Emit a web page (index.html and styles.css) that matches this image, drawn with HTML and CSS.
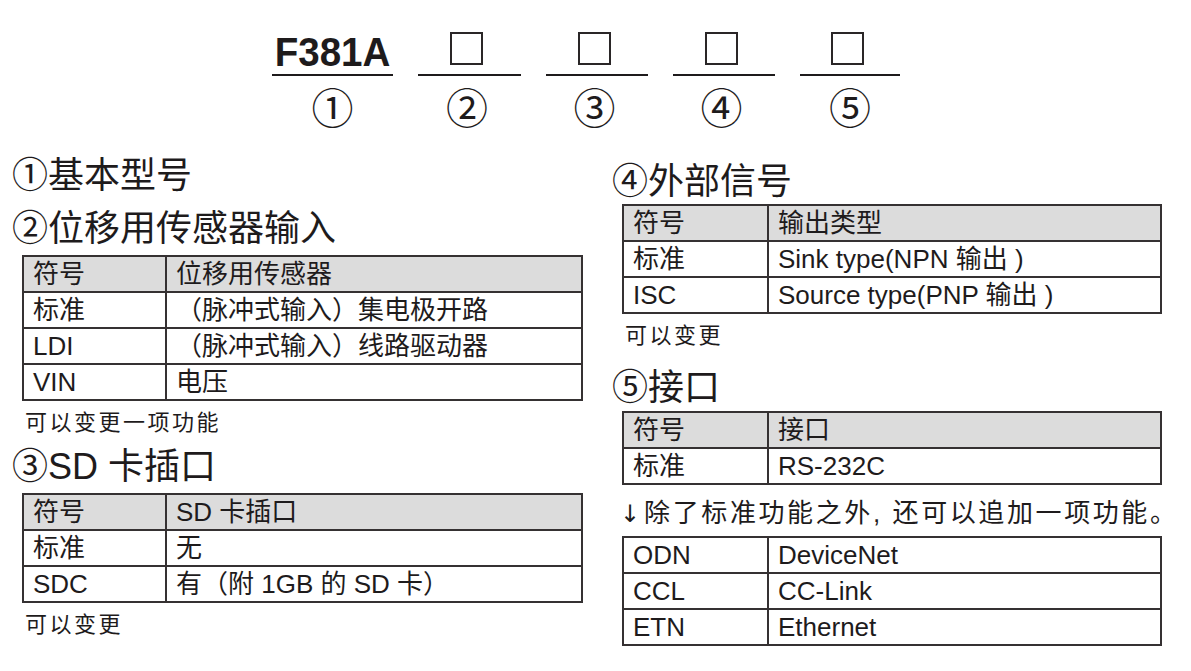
FILE: index.html
```html
<!DOCTYPE html>
<html lang="zh-CN">
<head>
<meta charset="utf-8">
<title>F381A 型号说明</title>
<link rel="stylesheet" href="styles.css">
</head>
<body>
<div class="page">
  <div class="code">
    <div class="seg seg1"><div class="top"><span class="model">F381A</span></div><div class="rule"></div><div class="num">①</div></div>
    <div class="seg seg2"><div class="top"><span class="box"></span></div><div class="rule"></div><div class="num">②</div></div>
    <div class="seg seg3"><div class="top"><span class="box"></span></div><div class="rule"></div><div class="num">③</div></div>
    <div class="seg seg4"><div class="top"><span class="box"></span></div><div class="rule"></div><div class="num">④</div></div>
    <div class="seg seg5"><div class="top"><span class="box"></span></div><div class="rule"></div><div class="num">⑤</div></div>
  </div>
  <div class="cols">
    <div class="col left">
      <h2 class="h h-first">①基本型号</h2>
      <h2 class="h h-second">②位移用传感器输入</h2>
      <table class="tbl">
        <tr class="head"><td class="c1">符号</td><td>位移用传感器</td></tr>
        <tr><td class="c1">标准</td><td>（脉冲式输入）集电极开路</td></tr>
        <tr><td class="c1">LDI</td><td>（脉冲式输入）线路驱动器</td></tr>
        <tr><td class="c1">VIN</td><td>电压</td></tr>
      </table>
      <p class="note">可以变更一项功能</p>
      <h2 class="h h-third">③SD 卡插口</h2>
      <table class="tbl">
        <tr class="head"><td class="c1">符号</td><td>SD 卡插口</td></tr>
        <tr><td class="c1">标准</td><td>无</td></tr>
        <tr><td class="c1">SDC</td><td>有（附 1GB 的 SD 卡）</td></tr>
      </table>
      <p class="note">可以变更</p>
    </div>
    <div class="col right">
      <h2 class="h h-four">④外部信号</h2>
      <table class="tbl">
        <tr class="head"><td class="c1">符号</td><td>输出类型</td></tr>
        <tr><td class="c1">标准</td><td>Sink type(NPN 输出 )</td></tr>
        <tr><td class="c1">ISC</td><td>Source type(PNP 输出 )</td></tr>
      </table>
      <p class="note">可以变更</p>
      <h2 class="h h-five">⑤接口</h2>
      <table class="tbl tbl-if">
        <tr class="head"><td class="c1">符号</td><td>接口</td></tr>
        <tr><td class="c1">标准</td><td>RS-232C</td></tr>
      </table>
      <p class="addon"><span class="arrow">↓</span>除了标准功能之外, 还可以追加一项功能。</p>
      <table class="tbl tbl-opt">
        <tr><td class="c1">ODN</td><td>DeviceNet</td></tr>
        <tr><td class="c1">CCL</td><td>CC-Link</td></tr>
        <tr><td class="c1">ETN</td><td>Ethernet</td></tr>
      </table>
    </div>
  </div>
</div>
</body>
</html>
```

FILE: styles.css
```css
* { box-sizing: border-box; }
html, body { margin: 0; padding: 0; background: #ffffff; }
body {
  font-family: "Liberation Sans", "Noto Sans CJK SC", sans-serif;
  color: #1e1b1c;
  width: 1191px;
  height: 671px;
  overflow: hidden;
}

/* model code header */
.code {
  display: flex;
  gap: 25px;
  padding-left: 272px;
  padding-top: 30px;
}
.seg { display: flex; flex-direction: column; align-items: stretch; }
.seg1 { width: 121px; }
.seg2 { width: 103px; }
.seg3 { width: 102px; }
.seg4 { width: 102px; }
.seg5 { width: 100px; }
.top {
  height: 36px;
  display: flex;
  align-items: flex-end;
  justify-content: center;
}
.model {
  display: inline-block;
  font-weight: bold;
  font-size: 41px;
  line-height: 28px;
  letter-spacing: 0;
  transform: scaleX(0.94);
}
.box {
  display: block;
  width: 33px;
  height: 33px;
  border: 2px solid #2a2627;
  margin: 0 6px 1px 0;
}
.rule {
  height: 2px;
  background: #1e1b1c;
  margin-top: 8px;
}
.num {
  font-family: "Noto Sans CJK SC", sans-serif;
  font-size: 42px;
  line-height: 44px;
  text-align: center;
  margin-top: 8px;
}
.seg2 .num, .seg3 .num, .seg4 .num { padding-right: 5px; }

/* columns */
.cols {
  display: grid;
  grid-template-columns: 600px 591px;
}
.col { padding-left: 12px; }

.h {
  margin: 0;
  font-weight: normal;
  font-size: 36px;
  line-height: 44px;
}
.h-first { margin-top: 26px; }
.h-second { margin-top: 9px; }
.h-third { margin-top: 8px; }
.h-four { margin-top: 32px; }
.h-five { margin-top: 16px; }

.tbl {
  border-collapse: collapse;
  margin-left: 10px;
  font-size: 26px;
}
.left .tbl { width: 561px; margin-top: 4px; }
.right .tbl { width: 540px; margin-top: 0; }
.right .tbl-if { margin-top: 1px; }
.tbl td {
  border: 2px solid #353132;
  height: 36px;
  padding: 0 9px;
  line-height: 30px;
  vertical-align: middle;
  white-space: nowrap;
}
.tbl .c1 { width: 143px; }
.right .tbl .c1 { width: 145px; }
.tbl .head td { background: #dcdcdc; }

.note {
  margin: 8px 0 0 13px;
  font-size: 22px;
  line-height: 28px;
  letter-spacing: 2.5px;
}
.addon {
  margin: 12px 0 0 8px;
  font-size: 26px;
  line-height: 32px;
  letter-spacing: 2.6px;
}
.arrow {
  font-family: "DejaVu Sans", sans-serif;
  font-size: 24px;
  letter-spacing: 0;
  margin-right: 4px;
}
.right .tbl-opt { margin-top: 6px; }
```
